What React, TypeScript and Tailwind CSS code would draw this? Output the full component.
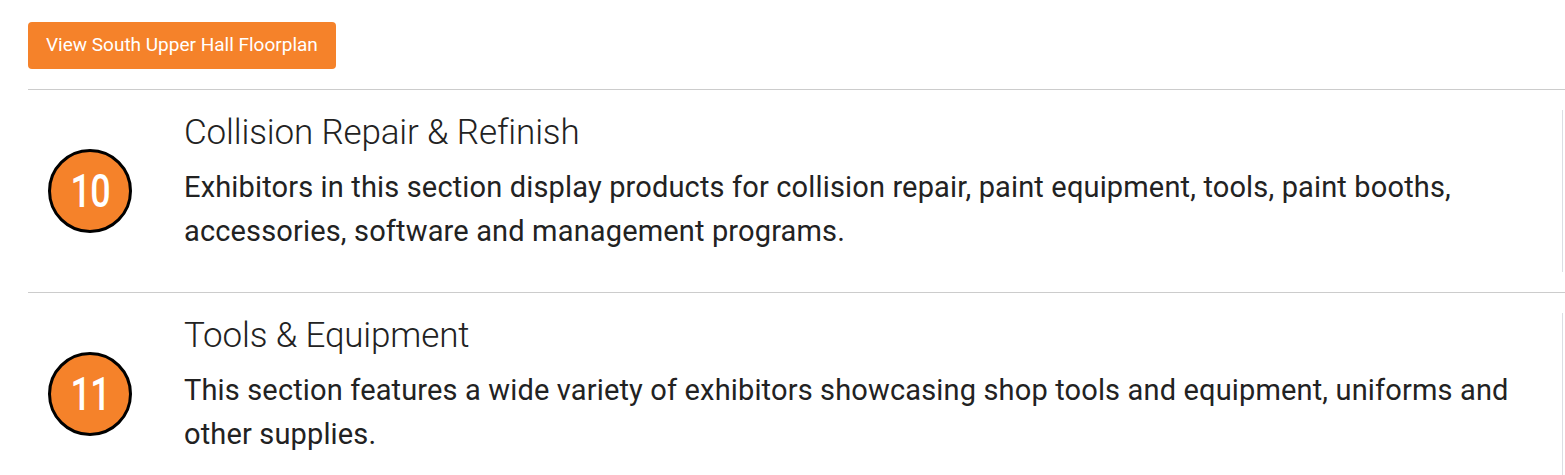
import React from "react";

const sections = [
  {
    num: "10",
    title: "Collision Repair & Refinish",
    text: "Exhibitors in this section display products for collision repair, paint equipment, tools, paint booths, accessories, software and management programs.",
  },
  {
    num: "11",
    title: "Tools & Equipment",
    text: "This section features a wide variety of exhibitors showcasing shop tools and equipment, uniforms and other supplies.",
  },
];

const App: React.FC = () => {
  return (
    <div className="bg-white pl-[28px] pt-[22px] text-[#222] font-['Roboto',sans-serif]">
      <button className="h-[47px] px-[18px] rounded-[4px] bg-[#f5822a] text-white text-[19px]">
        View South Upper Hall Floorplan
      </button>

      <div className="mt-[20px]">
        {sections.map((s) => (
          <div key={s.num} className="border-t border-[#cccccc] py-[20px]">
            <div className="mr-[2px] flex items-center border-r border-[#dcdde3]">
              <div className="w-[156px] shrink-0 pl-[20px]">
                <div className="w-[84px] h-[84px] rounded-full border-[3px] border-black bg-[#f5822a] flex items-center justify-center text-white">
                  <span className="text-[46px] font-medium leading-none scale-x-[0.78] tracking-[-1px]">{s.num}</span>
                </div>
              </div>
              <div className="pr-[40px] pb-[19px] self-start">
                <h2 className="text-[35px] font-light leading-[46px] tracking-[-0.15px]">{s.title}</h2>
                <p className="text-[29px] leading-[44px] mt-[9px] tracking-[0.15px]">{s.text}</p>
              </div>
            </div>
          </div>
        ))}
      </div>
    </div>
  );
};

export default App;
